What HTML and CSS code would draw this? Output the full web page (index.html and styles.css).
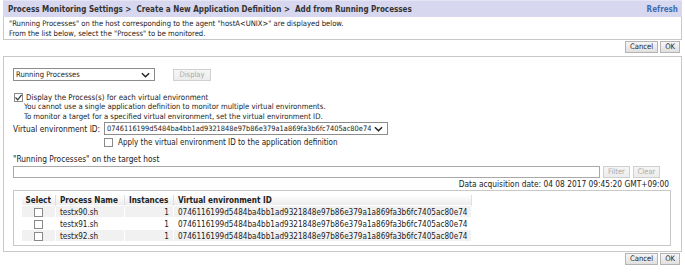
FILE: index.html
```html
<!DOCTYPE html>
<html>
<head>
<meta charset="utf-8">
<link rel="stylesheet" href="styles.css">
</head>
<body>
<div class="header">
  <span class="crumbs">Process Monitoring Settings &gt; &nbsp;Create a New Application Definition &gt; &nbsp;Add from Running Processes</span>
  <a class="refresh">Refresh</a>
</div>
<div class="intro">
  <div>"Running Processes" on the host corresponding to the agent "hostA&lt;UNIX&gt;" are displayed below.</div>
  <div>From the list below, select the "Process" to be monitored.</div>
</div>
<div class="actions">
  <button class="btn">Cancel</button>
  <button class="btn">OK</button>
</div>
<div class="panel">
  <div class="row-top">
    <div class="select sel-main"><span>Running Processes</span><svg class="chev" viewBox="0 0 10 6" width="9" height="6"><path d="M1 1 L5 5 L9 1" fill="none" stroke="#222" stroke-width="1.6"/></svg></div>
    <button class="btn disabled">Display</button>
  </div>
  <div class="chkline"><span class="chk checked"><svg viewBox="0 0 9 9" width="9" height="9"><path d="M1.5 4.5 L3.7 6.8 L7.6 1.8" fill="none" stroke="#333" stroke-width="1.2"/></svg></span>Display the Process(s) for each virtual environment</div>
  <div class="note">You cannot use a single application definition to monitor multiple virtual environments.</div>
  <div class="note">To monitor a target for a specified virtual environment, set the virtual environment ID.</div>
  <div class="vrow">
    <span class="vlabel">Virtual environment ID:</span>
    <div class="select sel-id"><span class="val">0746116199d5484ba4bb1ad9321848e97b86e379a1a869fa3b6fc7405ac80e74</span><svg class="chev" viewBox="0 0 10 6" width="9" height="6"><path d="M1 1 L5 5 L9 1" fill="none" stroke="#222" stroke-width="1.6"/></svg></div>
  </div>
  <div class="applyline"><span class="chk"></span>Apply the virtual environment ID to the application definition</div>
  <div class="subtitle">"Running Processes" on the target host</div>
  <div class="filterrow">
    <div class="textinput"></div>
    <button class="btn disabled">Filter</button>
    <button class="btn disabled">Clear</button>
  </div>
  <div class="acq">Data acquisition date: 04 08 2017 09:45:20 GMT+09:00</div>
  <div class="tablebox">
    <table class="grid">
      <thead>
        <tr><th class="c-sel">Select</th><th class="c-name">Process Name</th><th class="c-inst">Instances</th><th class="c-id">Virtual environment ID</th></tr>
      </thead>
      <tbody>
        <tr class="odd"><td class="c-sel"><span class="chk"></span></td><td>testx90.sh</td><td class="num">1</td><td>0746116199d5484ba4bb1ad9321848e97b86e379a1a869fa3b6fc7405ac80e74</td></tr>
        <tr><td class="c-sel"><span class="chk"></span></td><td>testx91.sh</td><td class="num">1</td><td>0746116199d5484ba4bb1ad9321848e97b86e379a1a869fa3b6fc7405ac80e74</td></tr>
        <tr class="odd"><td class="c-sel"><span class="chk"></span></td><td>testx92.sh</td><td class="num">1</td><td>0746116199d5484ba4bb1ad9321848e97b86e379a1a869fa3b6fc7405ac80e74</td></tr>
      </tbody>
    </table>
  </div>
</div>
<div class="actions">
  <button class="btn">Cancel</button>
  <button class="btn">OK</button>
</div>
</body>
</html>
```
FILE: styles.css
```css
* { box-sizing: border-box; }
body {
  margin: 0;
  padding: 0 3px;
  background: #fff;
  font-family: "DejaVu Sans Condensed", "DejaVu Sans", Verdana, sans-serif;
  font-size: 7.6px;
  color: #222;
  width: 685px;
}
.header {
  display: flex;
  justify-content: space-between;
  align-items: center;
  height: 17px;
  background: #d7d7ef;
  padding: 0 4px 0 5px;
  border-top: 1px solid #e4e4f4;
}
.crumbs { font-weight: bold; color: #333; font-size: 8px; }
.refresh { color: #3f6db4; font-weight: bold; font-size: 8px; }
.intro {
  border: 1px solid #c8c8c8;
  border-top: none;
  padding: 2px 5px 3px;
  line-height: 10px;
  height: 23px;
}
.actions {
  display: flex;
  justify-content: flex-end;
  gap: 2px;
  padding: 1px 2px 0 0;
  height: 16px;
}
.btn {
  font-family: inherit;
  font-size: 7.6px;
  height: 12px;
  padding: 0 4px;
  border: 1px solid #b4b4b4;
  background: linear-gradient(#f6f6f6, #e0e0e0);
  color: #222;
  line-height: 10px;
}
.btn.disabled { color: #a8a8a8; border-color: #d0d0d0; background: linear-gradient(#f6f6f6, #ececec); }
.panel {
  border: 1px solid #c8c8c8;
  margin-top: 0;
  padding: 11px 9px 8px 9px;
  height: 196px;
  font-size: 7.9px;
}
.row-top { display: flex; gap: 18px; align-items: center; height: 13px; font-size: 7.6px; }
.select {
  display: flex;
  justify-content: space-between;
  align-items: center;
  height: 13px;
  border: 1px solid #8c8c8c;
  padding: 0 4px 0 2px;
  background: #fff;
  white-space: nowrap;
}
.select .val { overflow: hidden; font-size: 7.4px; }
.chev { flex-shrink: 0; }
.sel-main { width: 142px; }
.row-top .btn { width: 38px; padding: 0; }
.sel-id { width: 284px; }
.chkline { margin-top: 11px; display: flex; align-items: center; height: 10px; padding-left: 1px; }
.chk {
  display: inline-block;
  width: 9px;
  height: 9px;
  border: 1px solid #8a8a8a;
  background: #fff;
  margin-right: 3px;
  position: relative;
  flex-shrink: 0;
}
.chk svg { position: absolute; left: -1px; top: -1px; }
.note { padding-left: 11px; line-height: 10px; font-size: 7.7px; }
.vrow { display: flex; align-items: center; gap: 2px; height: 13px; }
.vlabel { width: 89px; font-size: 8.3px; white-space: nowrap; }
.applyline { display: flex; align-items: center; padding-left: 91px; margin-top: 2px; height: 10px; font-size: 8px; }
.applyline .chk { margin-right: 5px; }
.subtitle { margin-top: 7px; height: 10px; font-size: 8.3px; }
.filterrow { display: flex; gap: 3px; align-items: center; margin-top: 1px; height: 13px; }
.textinput { width: 587px; height: 12px; border: 1px solid #a8a8a8; background: #fff; }
.filterrow .btn { width: 27px; padding: 0; }
.acq { text-align: right; padding-right: 3px; margin-top: 1px; height: 10px; font-size: 8.3px; }
.tablebox {
  margin-top: 1px;
  width: 658px;
  height: 56px;
  border: 1px solid #c8c8c8;
  padding: 4px 7px;
}
.grid { border-collapse: collapse; white-space: nowrap; font-size: 8.1px; }
.grid th {
  font-weight: bold;
  text-align: left;
  height: 10px;
  padding: 0 4px;
  background: linear-gradient(#ffffff, #ececec);
  border-right: 1px solid #e0e0e0;
}
.grid td {
  height: 12px;
  padding: 0 4px;
  border: 1px solid #fff;
}
.grid tr.odd td { background: #f1f1f1; }
.grid td.num { text-align: right; }
.grid .c-sel { width: 31px; text-align: center; }
.grid .c-sel .chk { margin: 0; vertical-align: middle; }
.grid .c-name { width: 69px; }
.grid .c-inst { width: 49px; }
.grid .c-id { width: 298px; }
```
